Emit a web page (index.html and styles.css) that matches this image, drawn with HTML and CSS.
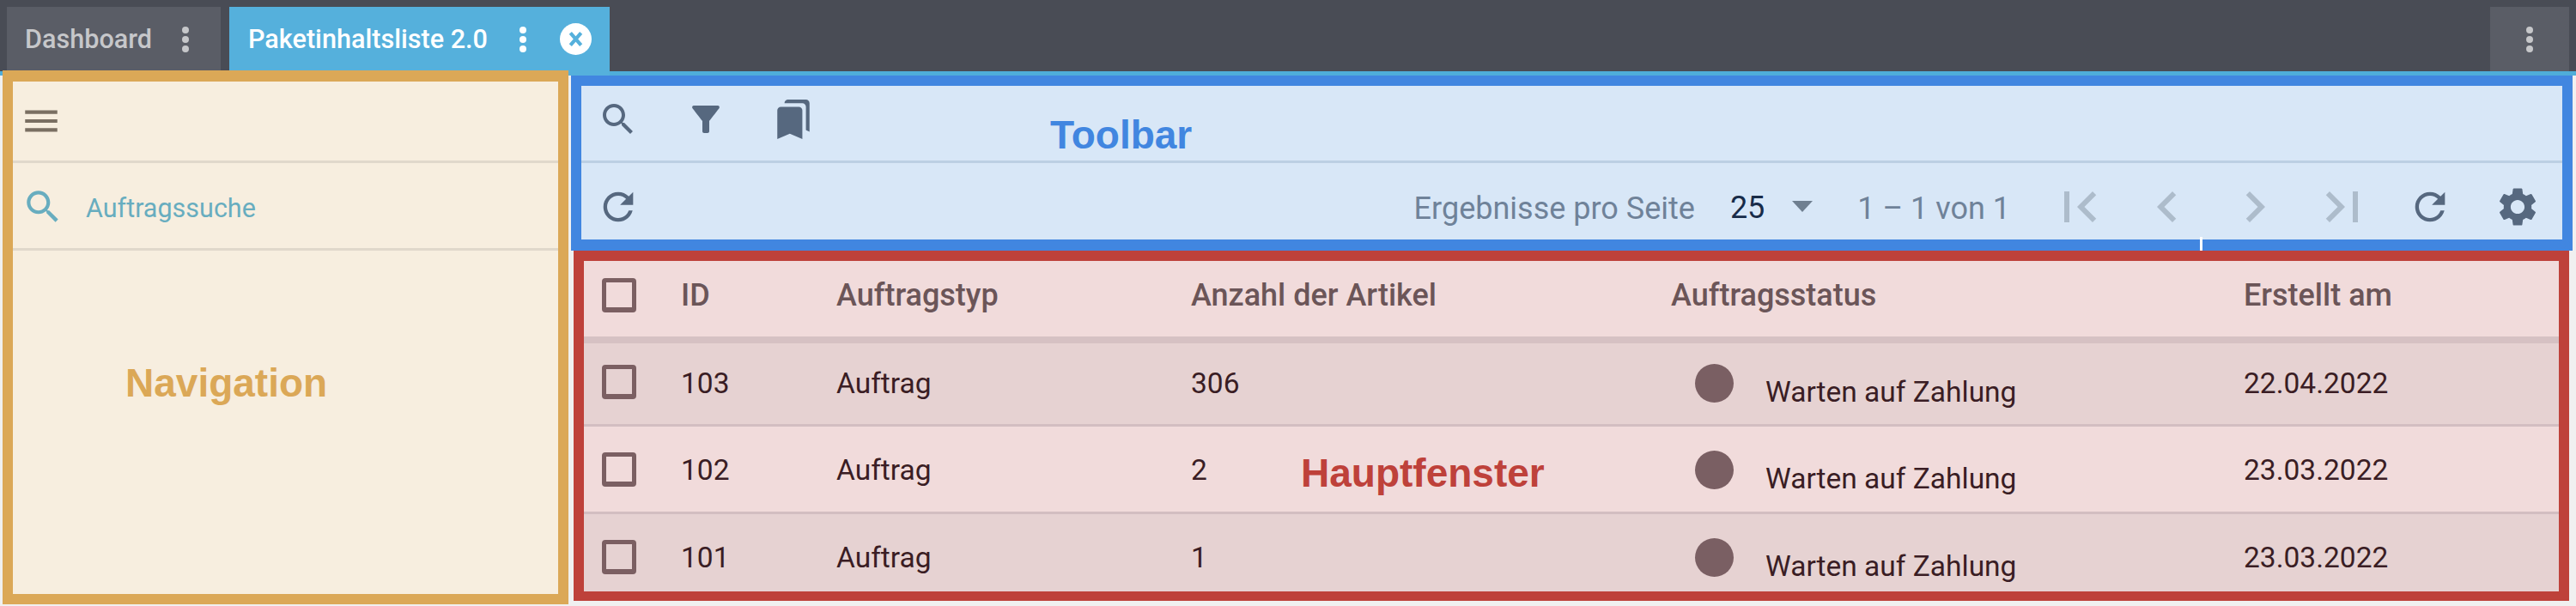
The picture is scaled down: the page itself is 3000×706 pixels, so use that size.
FILE: index.html
```html
<!DOCTYPE html>
<html lang="de">
<head>
<meta charset="utf-8">
<title>Paketinhaltsliste 2.0</title>
<link rel="stylesheet" href="styles.css">
</head>
<body>
<header class="tabbar">
  <div class="tab tab-dash">
    <span class="tab-title">Dashboard</span>
    <span class="dots"><i></i><i></i><i></i></span>
  </div>
  <div class="tab tab-active">
    <span class="tab-title">Paketinhaltsliste 2.0</span>
    <span class="dots"><i></i><i></i><i></i></span>
    <svg class="close" viewBox="0 0 36 36"><circle cx="18" cy="18" r="18" fill="#fff"/><path d="M12 11l12 14M24 11L12 25" stroke="#55b0dc" stroke-width="4" fill="none"/></svg>
  </div>
  <div class="tab tab-more">
    <span class="dots"><i></i><i></i><i></i></span>
  </div>
</header>
<main class="main">
  <nav class="nav">
    <div class="nav-row nav-menu">
      <svg class="nav-ham" viewBox="0 0 24 24"><path d="M3 18h18v-2H3v2zm0-5h18v-2H3v2zm0-7v2h18V6H3z"/></svg>
    </div>
    <div class="nav-row nav-search">
      <svg class="nav-lens" viewBox="0 0 24 24"><path d="M15.5 14h-.79l-.28-.27C15.41 12.59 16 11.11 16 9.5 16 5.91 13.09 3 9.5 3S3 5.91 3 9.5 5.91 16 9.5 16c1.61 0 3.09-.59 4.23-1.57l.27.28v.79l5 4.99L20.49 19l-4.99-5zm-6 0C7.01 14 5 11.99 5 9.5S7.01 5 9.5 5 14 7.01 14 9.5 11.99 14 9.5 14z"/></svg>
      <span class="nav-search-text">Auftragssuche</span>
    </div>
    <div class="label label-nav">Navigation</div>
  </nav>
  <div class="content">
    <section class="toolbar">
      <div class="tb-row tb-top">
        <span class="btn"><svg class="i48" viewBox="0 0 24 24"><path d="M15.5 14h-.79l-.28-.27C15.41 12.59 16 11.11 16 9.5 16 5.91 13.09 3 9.5 3S3 5.91 3 9.5 5.91 16 9.5 16c1.61 0 3.09-.59 4.23-1.57l.27.28v.79l5 4.99L20.49 19l-4.99-5zm-6 0C7.01 14 5 11.99 5 9.5S7.01 5 9.5 5 14 7.01 14 9.5 11.99 14 9.5 14z"/></svg></span>
        <span class="btn"><svg class="i48" viewBox="0 0 24 24"><path d="M4.25 5.61C6.27 8.2 10 13 10 13v6c0 .55.45 1 1 1h2c.55 0 1-.45 1-1v-6s3.72-4.8 5.74-7.39c.51-.66.04-1.61-.79-1.61H5.04c-.83 0-1.3.95-.79 1.61z"/></svg></span>
        <span class="btn"><svg class="i50" viewBox="0 0 24 24"><path d="M19 18l2 1V3c0-1.1-.9-2-2-2H8.99C7.89 1 7 1.9 7 3h10c1.1 0 2 .9 2 2v13zM15 5H5c-1.1 0-2 .9-2 2v16l7-3 7 3V7c0-1.1-.9-2-2-2z"/></svg></span>
      </div>
      <div class="tb-row tb-bottom">
        <span class="btn"><svg class="i52" viewBox="0 0 24 24"><path d="M17.65 6.35C16.2 4.9 14.21 4 12 4c-4.42 0-7.99 3.58-7.99 8s3.57 8 7.99 8c3.73 0 6.84-2.55 7.73-6h-2.08c-.82 2.33-3.04 4-5.65 4-3.31 0-6-2.69-6-6s2.69-6 6-6c1.66 0 3.14.69 4.22 1.78L13 11h7V4l-2.35 2.35z"/></svg></span>
        <div class="pager">
          <span class="pg-label">Ergebnisse pro Seite</span>
          <span class="pg-size">25</span>
          <span class="pg-caret"></span>
          <span class="pg-range">1 – 1 von 1</span>
          <div class="pg-btns">
            <span class="btn off"><svg class="i72" viewBox="0 0 24 24"><path d="M18.41 16.59L13.82 12l4.59-4.59L17 6l-6 6 6 6zM6 6h2v12H6z"/></svg></span>
            <span class="btn off"><svg class="i72" viewBox="0 0 24 24"><path d="M15.41 7.41L14 6l-6 6 6 6 1.41-1.41L10.83 12z"/></svg></span>
            <span class="btn off"><svg class="i72" viewBox="0 0 24 24"><path d="M10 6L8.59 7.41 13.17 12l-4.58 4.59L10 18l6-6z"/></svg></span>
            <span class="btn off"><svg class="i72" viewBox="0 0 24 24"><path d="M5.59 7.41L10.18 12l-4.59 4.59L7 18l6-6-6-6zM16 6h2v12h-2z"/></svg></span>
            <span class="btn"><svg class="i52" viewBox="0 0 24 24"><path d="M17.65 6.35C16.2 4.9 14.21 4 12 4c-4.42 0-7.99 3.58-7.99 8s3.57 8 7.99 8c3.73 0 6.84-2.55 7.73-6h-2.08c-.82 2.33-3.04 4-5.65 4-3.31 0-6-2.69-6-6s2.69-6 6-6c1.66 0 3.14.69 4.22 1.78L13 11h7V4l-2.35 2.35z"/></svg></span>
            <span class="btn"><svg class="i54" viewBox="0 0 24 24"><path d="M19.14 12.94c.04-.3.06-.61.06-.94 0-.32-.02-.64-.07-.94l2.03-1.58c.18-.14.23-.41.12-.61l-1.92-3.32c-.12-.22-.37-.29-.59-.22l-2.39.96c-.5-.38-1.03-.7-1.62-.94l-.36-2.54c-.04-.24-.24-.41-.48-.41h-3.84c-.24 0-.43.17-.47.41l-.36 2.54c-.59.24-1.13.57-1.62.94l-2.39-.96c-.22-.08-.47 0-.59.22L2.74 8.87c-.12.21-.08.47.12.61l2.03 1.58c-.05.3-.09.63-.09.94s.02.64.07.94l-2.03 1.58c-.18.14-.23.41-.12.61l1.92 3.32c.12.22.37.29.59.22l2.39-.96c.5.38 1.03.7 1.62.94l.36 2.54c.05.24.24.41.48.41h3.84c.24 0 .44-.17.47-.41l.36-2.54c.59-.24 1.13-.56 1.62-.94l2.39.96c.22.08.47 0 .59-.22l1.92-3.32c.12-.22.07-.47-.12-.61l-2.01-1.58zM12 15.6c-1.98 0-3.6-1.62-3.6-3.6s1.62-3.6 3.6-3.6 3.6 1.62 3.6 3.6-1.62 3.6-3.6 3.6z"/></svg></span>
          </div>
        </div>
      </div>
      <div class="label label-toolbar">Toolbar</div>
      <span class="tick"></span>
    </section>
    <section class="table">
      <div class="tr thead">
        <span class="cb"></span><span>ID</span><span>Auftragstyp</span><span>Anzahl der Artikel</span><span>Auftragsstatus</span><span>Erstellt am</span>
      </div>
      <div class="tr row row-first alt">
        <span class="cb"></span><span>103</span><span>Auftrag</span><span>306</span>
        <span class="status"><i class="dot"></i><span class="status-text">Warten auf Zahlung</span></span><span>22.04.2022</span>
      </div>
      <div class="tr row">
        <span class="cb"></span><span>102</span><span>Auftrag</span><span>2</span>
        <span class="status"><i class="dot"></i><span class="status-text">Warten auf Zahlung</span></span><span>23.03.2022</span>
      </div>
      <div class="tr row alt">
        <span class="cb"></span><span>101</span><span>Auftrag</span><span>1</span>
        <span class="status"><i class="dot"></i><span class="status-text">Warten auf Zahlung</span></span><span>23.03.2022</span>
      </div>
      <div class="label label-main">Hauptfenster</div>
    </section>
  </div>
</main>
</body>
</html>
```
FILE: styles.css
```css
* { box-sizing: border-box; }
html, body { margin: 0; padding: 0; }
body {
  width: 3000px;
  height: 706px;
  overflow: hidden;
  background: #f0f0f0;
  font-family: Roboto, "Liberation Sans", sans-serif;
}

/* tab bar */
.tabbar {
  display: flex;
  height: 88px;
  padding: 8px 8px 0;
  background: #494c55;
  border-bottom: 5px solid #4fadd9;
}
.tab {
  display: flex;
  align-items: center;
  height: 75px;
  font-size: 30.6px;
  font-weight: 500;
}
.tab-dash {
  width: 249px;
  padding-left: 21px;
  background: #5a5d66;
  color: #c6c7ca;
}
.tab-dash .dots { margin-left: 35px; }
.tab-active {
  width: 443px;
  height: 80px;
  margin-left: 10px;
  padding: 0 0 5px 22px;
  background: #55b0dc;
  color: #fff;
}
.tab-active .dots { margin-left: 37px; }
.tab-more {
  width: 92px;
  margin-left: auto;
  justify-content: center;
  background: #5a5d66;
}
.dots { display: flex; flex-direction: column; gap: 3px; }
.dots i {
  display: block;
  width: 8px;
  height: 8px;
  border-radius: 50%;
  background: #c6c7ca;
}
.tab-active .dots i { background: #fff; }
.close { width: 37px; height: 37px; margin-left: 39px; }

/* main area */
.main {
  display: flex;
  height: 618px;
  padding-left: 3px;
}
.nav {
  position: relative;
  width: 659px;
  height: 622px;
  margin-top: -6px;
  border: 12px solid #dba857;
  border-top-width: 13px;
  background: #f7eedf;
}
.nav-row {
  display: flex;
  align-items: center;
  border-bottom: 3px solid #e0d8cb;
}
.nav-menu { height: 95px; padding-left: 8px; }
.nav-ham { width: 50px; height: 50px; fill: #7a6f62; }
.nav-search {
  height: 102px;
  padding: 3px 0 0 10px;
  gap: 25px;
  font-size: 30.5px;
  color: #68adbf;
}
.nav-search-text { padding-top: 2px; }
.nav-lens { width: 50px; height: 50px; fill: #68adbf; }

.content {
  display: flex;
  flex-direction: column;
  margin-left: 3px;
  width: 2331px;
}

/* toolbar */
.toolbar {
  position: relative;
  height: 204px;
  border: 12px solid #4186e0;
  border-bottom-width: 13px;
  background: #d8e7f7;
}
.tb-row {
  display: flex;
  align-items: center;
  padding-left: 7px;
  gap: 30px;
}
.tb-top {
  height: 90px;
  padding-bottom: 9px;
  border-bottom: 3px solid #bccfe3;
}
.tb-bottom {
  height: 89px;
  padding-top: 12px;
  padding-right: 16px;
}
.btn {
  display: flex;
  align-items: center;
  justify-content: center;
  flex: none;
  width: 72px;
  height: 72px;
  fill: #56687f;
}
.btn.off { fill: #adbccb; }
.i48 { width: 48px; height: 48px; }
.i50 { width: 50px; height: 50px; }
.i52 { width: 52px; height: 52px; }
.i54 { width: 54px; height: 54px; }
.i72 { width: 72px; height: 72px; }
.pager {
  display: flex;
  align-items: center;
  margin-left: auto;
  font-size: 36px;
}
.pg-label { padding-top: 4px; color: #6f8299; }
.pg-size { margin-left: 41px; padding-top: 3px; color: #182c49; }
.pg-caret {
  width: 0;
  height: 0;
  margin-left: 32px;
  border-left: 12px solid transparent;
  border-right: 12px solid transparent;
  border-top: 13px solid #6f7f90;
}
.pg-range { margin-left: 52px; padding-top: 4px; color: #6f8299; }
.pg-btns { display: flex; gap: 30px; margin-left: 45px; }
.tick {
  position: absolute;
  left: 1885px;
  top: 176px;
  width: 3px;
  height: 20px;
  background: #fff;
}

/* table */
.table {
  position: relative;
  width: 2324px;
  height: 408px;
  margin-left: 3px;
  overflow: hidden;
  border: 12px solid #be413a;
  border-bottom-width: 11px;
  background: #f1dbdb;
}
.tr {
  display: grid;
  grid-template-columns: 92px 181px 413px 559px 667px 1fr;
  align-items: center;
  padding-left: 21px;
  font-size: 33.5px;
}
.thead {
  height: 96px;
  padding-bottom: 8px;
  border-bottom: 8px solid #d6c1c3;
  font-size: 36px;
  font-weight: 500;
  color: #6b5558;
}
.row {
  height: 102px;
  border-bottom: 3px solid #d3bec1;
  color: #3a1d24;
}
.row > span:not(.cb) { padding-top: 2px; }
.row-first { height: 97px; padding-bottom: 4px; }
.alt { background: #e6d2d2; }
.cb {
  display: block;
  width: 40px;
  height: 40px;
  border: 5px solid #7b5f62;
  border-bottom-width: 6px;
  border-radius: 4px;
}
.status { display: flex; align-items: center; padding-left: 28px; }
.dot {
  display: block;
  flex: none;
  width: 45px;
  height: 45px;
  border-radius: 50%;
  background: #7a5f63;
}
.status-text { margin: 20px 0 0 37px; }

/* annotation labels */
.label {
  position: absolute;
  font-family: "Liberation Sans", Arial, sans-serif;
  font-size: 46px;
  font-weight: 700;
  line-height: 52px;
}
.label-nav { left: 131px; top: 325px; color: #dba857; }
.label-toolbar { left: 546px; top: 31px; color: #4186e0; }
.label-main { left: 835px; top: 221px; color: #be413a; }
```
